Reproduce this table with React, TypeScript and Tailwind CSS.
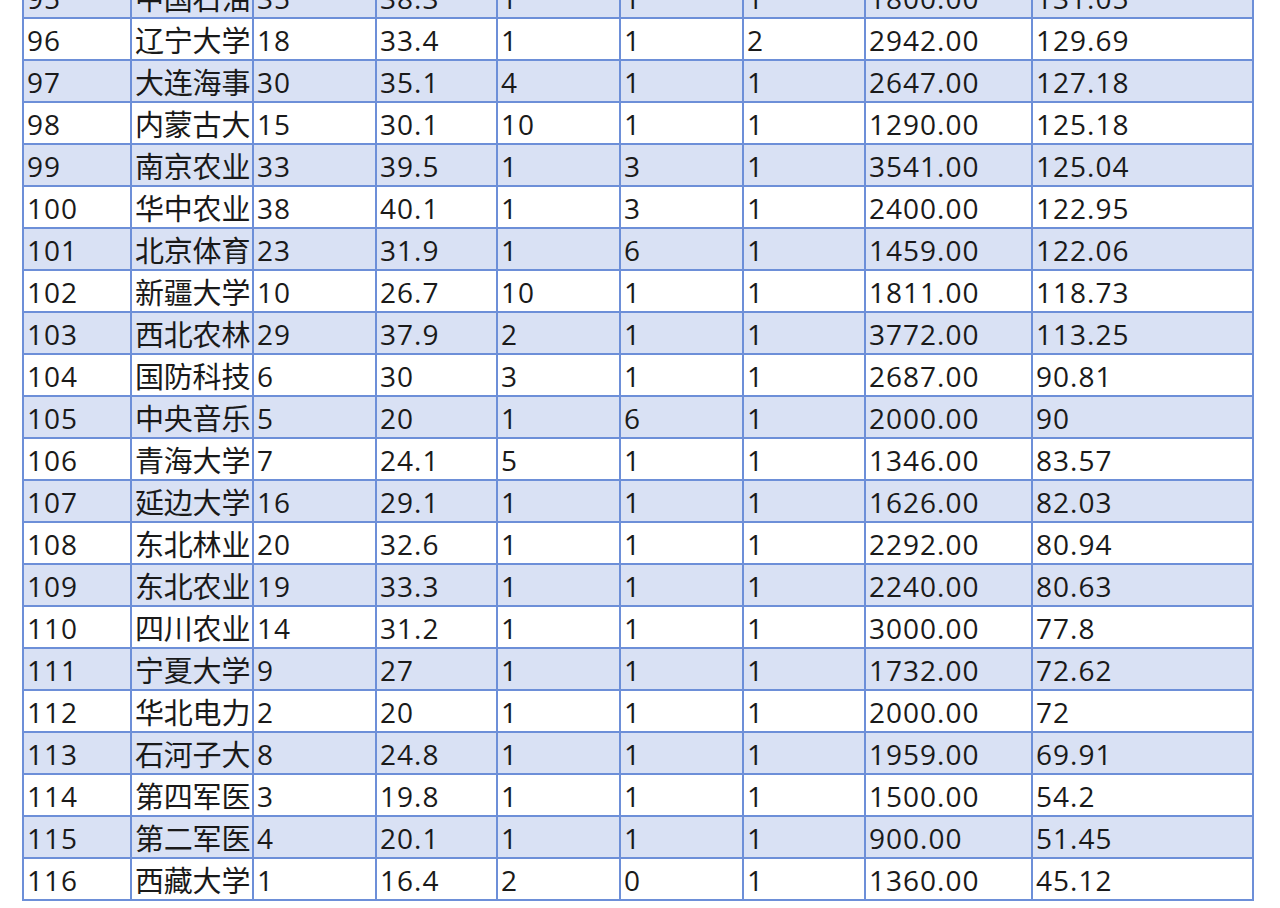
import React from "react";

const rows: string[][] = [
  ["95", "中国石油", "35", "38.3", "1", "1", "1", "1800.00", "131.05"],
  ["96", "辽宁大学", "18", "33.4", "1", "1", "2", "2942.00", "129.69"],
  ["97", "大连海事", "30", "35.1", "4", "1", "1", "2647.00", "127.18"],
  ["98", "内蒙古大", "15", "30.1", "10", "1", "1", "1290.00", "125.18"],
  ["99", "南京农业", "33", "39.5", "1", "3", "1", "3541.00", "125.04"],
  ["100", "华中农业", "38", "40.1", "1", "3", "1", "2400.00", "122.95"],
  ["101", "北京体育", "23", "31.9", "1", "6", "1", "1459.00", "122.06"],
  ["102", "新疆大学", "10", "26.7", "10", "1", "1", "1811.00", "118.73"],
  ["103", "西北农林", "29", "37.9", "2", "1", "1", "3772.00", "113.25"],
  ["104", "国防科技", "6", "30", "3", "1", "1", "2687.00", "90.81"],
  ["105", "中央音乐", "5", "20", "1", "6", "1", "2000.00", "90"],
  ["106", "青海大学", "7", "24.1", "5", "1", "1", "1346.00", "83.57"],
  ["107", "延边大学", "16", "29.1", "1", "1", "1", "1626.00", "82.03"],
  ["108", "东北林业", "20", "32.6", "1", "1", "1", "2292.00", "80.94"],
  ["109", "东北农业", "19", "33.3", "1", "1", "1", "2240.00", "80.63"],
  ["110", "四川农业", "14", "31.2", "1", "1", "1", "3000.00", "77.8"],
  ["111", "宁夏大学", "9", "27", "1", "1", "1", "1732.00", "72.62"],
  ["112", "华北电力", "2", "20", "1", "1", "1", "2000.00", "72"],
  ["113", "石河子大", "8", "24.8", "1", "1", "1", "1959.00", "69.91"],
  ["114", "第四军医", "3", "19.8", "1", "1", "1", "1500.00", "54.2"],
  ["115", "第二军医", "4", "20.1", "1", "1", "1", "900.00", "51.45"],
  ["116", "西藏大学", "1", "16.4", "2", "0", "1", "1360.00", "45.12"],
];

export default function App() {
  return (
    <div
      className="w-[1280px] h-[908px] overflow-hidden bg-white text-[#1a1a1a]"
      style={{ fontFamily: '"Open Sans", "Noto Sans CJK SC", sans-serif' }}
    >
      <table className="table-fixed border-collapse ml-[22px] mt-[-25px] leading-none">
        <colgroup>
          <col className="w-[108px]" />
          <col className="w-[122px]" />
          <col className="w-[123px]" />
          <col className="w-[121px]" />
          <col className="w-[123px]" />
          <col className="w-[123px]" />
          <col className="w-[122px]" />
          <col className="w-[167px]" />
          <col className="w-[221px]" />
        </colgroup>
        <tbody>
          {rows.map((r, i) => (
            <tr key={r[0]} className={i % 2 === 0 ? "bg-[#d9e1f4]" : "bg-white"}>
              {r.map((c, j) => (
                <td
                  key={j}
                  className={
                    "h-[42px] p-0 pl-[3px] pt-[2px] align-middle whitespace-nowrap overflow-hidden border-2 border-[#6d8fd8]" +
                    (j === 1
                      ? " text-[29px] tracking-[-0.2px]"
                      : " text-[28px] tracking-[1px]")
                  }
                >
                  {c}
                </td>
              ))}
            </tr>
          ))}
        </tbody>
      </table>
    </div>
  );
}
